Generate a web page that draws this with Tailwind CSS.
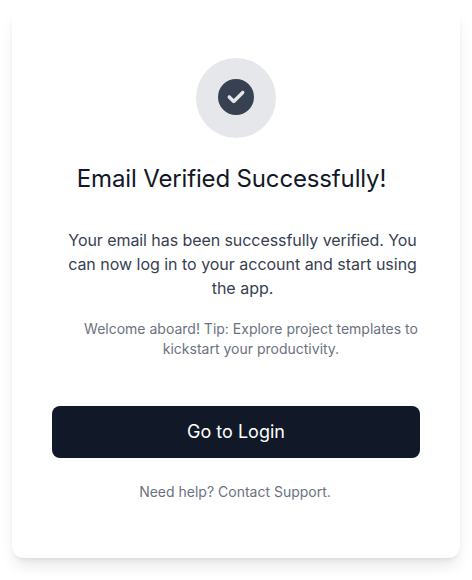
<!DOCTYPE html>
<html lang="en">
<head>
<meta charset="utf-8">
<title>Email Verified</title>
<script src="https://cdn.jsdelivr.net/npm/@tailwindcss/browser@4"></script>
</head>
<body class="bg-white font-['Inter',sans-serif] antialiased">
<main class="h-[580px] w-[472px] overflow-hidden px-3 pt-1.5">
  <section class="flex h-[552px] w-[448px] flex-col items-center rounded-xl bg-white px-10 pt-[52px] text-center shadow-lg">
    <div class="flex size-20 shrink-0 items-center justify-center rounded-full bg-[#e5e7eb] pb-[3px]">
      <svg class="size-9" viewBox="0 0 512 512" fill="#374151" aria-hidden="true"><path d="M256 512A256 256 0 1 0 256 0a256 256 0 1 0 0 512zM369 209L241 337c-9.400 9.400-24.600 9.400-33.900 0l-64-64c-9.400-9.400-9.400-24.600 0-33.900s24.600-9.400 33.900 0l47 47L335 175c9.400-9.400 24.600-9.400 33.900 0s9.400 24.600 0 33.900z"/></svg>
    </div>
    <h1 class="mt-[25px] -ml-[9px] text-2xl leading-8 tracking-[-0.15px] text-[#111827] whitespace-nowrap">Email Verified Successfully!</h1>
    <p class="mt-[33px] ml-[13px] text-base leading-6 tracking-[-0.02px] text-[#374151] whitespace-nowrap"><span class="tracking-[-0.07px]">Your email has been successfully verified. You</span><br>can now log in to your account and start using<br>the app.</p>
    <p class="mt-[19px] ml-[30px] text-sm leading-5 text-[#6b7280] whitespace-nowrap">Welcome aboard! Tip: Explore project templates to<br>kickstart your productivity.</p>
    <button class="mt-[47px] h-[52px] w-full shrink-0 rounded-lg bg-[#111827] text-lg leading-7 text-white">Go to Login</button>
    <p class="mt-6 -ml-[2px] text-sm leading-5 text-[#6b7280]">Need help? Contact Support.</p>
  </section>
</main>
</body>
</html>
